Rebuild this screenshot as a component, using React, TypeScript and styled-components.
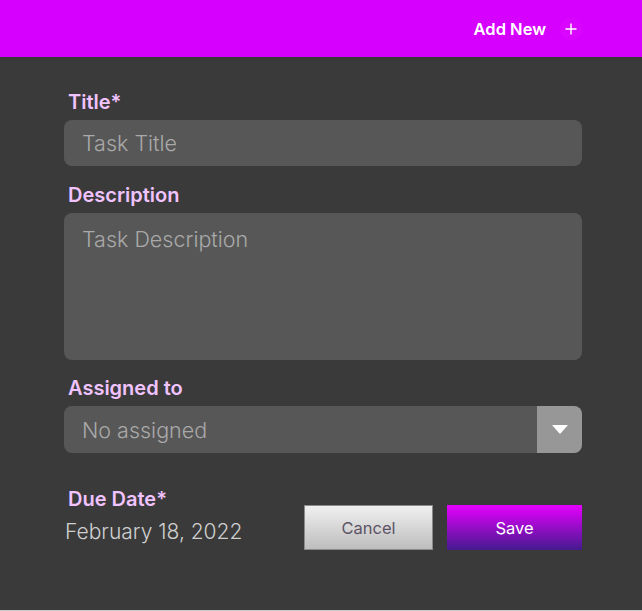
import React from "react";
import styled, { createGlobalStyle } from "styled-components";

const GlobalStyle = createGlobalStyle`
   html, body {
      margin: 0;
      padding: 0;
      background: #c9c9c9;
   }
   * {
      box-sizing: border-box;
   }
`;

const App: React.FC = () => {
   return (
      <>
         <GlobalStyle />
         <Page>
            <TopBar>
               <AddNew>Add New</AddNew>
               <PlusButton>
                  <svg width="12" height="12" viewBox="0 0 12 12">
                     <path d="M6 0.5 V11.5 M0.5 6 H11.5" stroke="#ffffff" strokeWidth="1.4" />
                  </svg>
               </PlusButton>
            </TopBar>

            <Form>
               <Label>Title*</Label>
               <TextInput placeholder="Task Title" />

               <Label $top={17}>Description</Label>
               <TextArea placeholder="Task Description" />

               <Label $top={16}>Assigned to</Label>
               <SelectBox>
                  <SelectText>No assigned</SelectText>
                  <SelectArrow>
                     <svg width="16" height="9" viewBox="0 0 16 9">
                        <path d="M0 0 H16 L8 9 Z" fill="#ffffff" />
                     </svg>
                  </SelectArrow>
               </SelectBox>

               <BottomRow>
                  <DueColumn>
                     <Label>Due Date*</Label>
                     <DateText>February 18, 2022</DateText>
                  </DueColumn>
                  <Buttons>
                     <CancelButton>Cancel</CancelButton>
                     <SaveButton>Save</SaveButton>
                  </Buttons>
               </BottomRow>
            </Form>
         </Page>
      </>
   );
};

export default App;

const Page = styled.div`
   width: 642px;
   height: 610px;
   background: #3a3a3a;
   font-family: Inter, "Noto Sans", sans-serif;
`;

const TopBar = styled.div`
   height: 57px;
   background: #d600ff;
   display: flex;
   align-items: center;
   justify-content: flex-end;
   padding: 0 60px 0 0;
   gap: 14px;
`;

const AddNew = styled.span`
   color: #ffffff;
   font-size: 16.5px;
   font-weight: 600;
`;

const PlusButton = styled.span`
   width: 22px;
   height: 22px;
   border-radius: 50%;
   background: #d906ff;
   display: flex;
   align-items: center;
   justify-content: center;
`;

const Form = styled.div`
   padding: 33px 60px 0 64px;
   display: flex;
   flex-direction: column;
`;

const Label = styled.label<{ $top?: number }>`
   display: block;
   margin: ${(p) => p.$top ?? 0}px 0 6px 4px;
   color: #f0c3ff;
   font-size: 20px;
   font-weight: 600;
   line-height: 24px;
`;

const fieldStyle = `
   width: 100%;
   border: none;
   outline: none;
   border-radius: 8px;
   background: #575757;
   color: #cfcfcf;
   font-family: Inter, "Noto Sans", sans-serif;
   font-size: 21.5px;
   font-weight: 300;
   padding: 0 18px;
   &::placeholder {
      color: #a9a9a9;
   }
`;

const TextInput = styled.input`
   ${fieldStyle}
   height: 46px;
`;

const TextArea = styled.textarea`
   ${fieldStyle}
   height: 147px;
   resize: none;
   padding-top: 13px;
   display: block;
`;

const SelectBox = styled.div`
   height: 47px;
   border-radius: 8px;
   background: #575757;
   display: flex;
   overflow: hidden;
`;

const SelectText = styled.div`
   flex: 1;
   display: flex;
   align-items: center;
   padding: 0 18px;
   color: #a9a9a9;
   font-size: 21.5px;
   font-weight: 300;
`;

const SelectArrow = styled.div`
   width: 45px;
   background: #979797;
   display: flex;
   align-items: center;
   justify-content: center;
`;

const BottomRow = styled.div`
   margin-top: 34px;
   display: flex;
   justify-content: space-between;
   align-items: flex-start;
`;

const DueColumn = styled.div`
   display: flex;
   flex-direction: column;

   & > label {
      margin-bottom: 8px;
   }
`;

const DateText = styled.div`
   color: #cfcfcf;
   font-size: 21px;
   font-weight: 300;
   margin-left: 1px;
`;

const Buttons = styled.div`
   display: flex;
   gap: 14px;
   margin-top: 18px;
`;

const CancelButton = styled.button`
   width: 129px;
   height: 45px;
   border: 1px solid #8a8a8a;
   background: linear-gradient(#f0f0f0, #bdbdbd);
   color: #5c5466;
   font-family: Inter, "Noto Sans", sans-serif;
   font-size: 16.5px;
   font-weight: 400;
`;

const SaveButton = styled.button`
   width: 135px;
   height: 45px;
   border: none;
   background: linear-gradient(#e600ff, #451a8e);
   color: #ffffff;
   font-family: Inter, "Noto Sans", sans-serif;
   font-size: 16.5px;
   font-weight: 400;
`;
